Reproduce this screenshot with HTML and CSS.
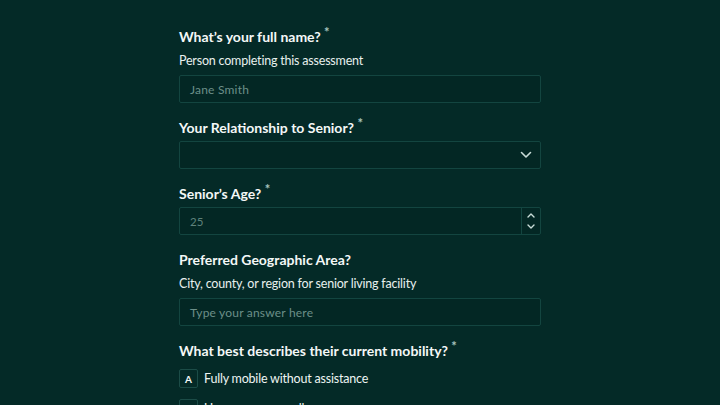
FILE: index.html
```html
<!DOCTYPE html>
<html>
<head>
<meta charset="utf-8">
<link rel="stylesheet" href="styles.css">
</head>
<body>
<main class="form">
  <section class="field">
    <h2 class="label">What’s your full name? <span class="req">*</span></h2>
    <p class="desc">Person completing this assessment</p>
    <div class="input"><span class="ph">Jane Smith</span></div>
  </section>
  <section class="field">
    <h2 class="label">Your Relationship to Senior? <span class="req">*</span></h2>
    <div class="input select">
      <svg class="chev" width="12" height="8" viewBox="0 0 12 8"><path d="M1.5 1.5 L6 6 L10.5 1.5" fill="none" stroke="#c9dcd8" stroke-width="1.6" stroke-linecap="round" stroke-linejoin="round"/></svg>
    </div>
  </section>
  <section class="field">
    <h2 class="label">Senior’s Age? <span class="req">*</span></h2>
    <div class="input number">
      <span class="ph num">25</span>
      <div class="stepper">
        <svg width="10" height="7" viewBox="0 0 10 7"><path d="M2 5 L5 2 L8 5" fill="none" stroke="#c9dcd8" stroke-width="1.4" stroke-linecap="round" stroke-linejoin="round"/></svg>
        <svg width="10" height="7" viewBox="0 0 10 7"><path d="M2 2 L5 5 L8 2" fill="none" stroke="#c9dcd8" stroke-width="1.4" stroke-linecap="round" stroke-linejoin="round"/></svg>
      </div>
    </div>
  </section>
  <section class="field">
    <h2 class="label">Preferred Geographic Area?</h2>
    <p class="desc">City, county, or region for senior living facility</p>
    <div class="input"><span class="ph">Type your answer here</span></div>
  </section>
  <section class="field">
    <h2 class="label">What best describes their current mobility? <span class="req">*</span></h2>
    <div class="options">
      <div class="option"><span class="key">A</span><span class="opt-text">Fully mobile without assistance</span></div>
      <div class="option"><span class="key">B</span><span class="opt-text">Uses a cane or walker</span></div>
    </div>
  </section>
</main>
</body>
</html>
```
FILE: styles.css
```css
html, body {
  margin: 0;
  padding: 0;
  background: #042a27;
  height: 100%;
  overflow: hidden;
}
body {
  font-family: Lato, "Noto Sans", sans-serif;
  color: #eef5f3;
}
.form {
  width: 362px;
  margin: 0 auto;
  padding-top: 28px;
  display: flex;
  flex-direction: column;
  gap: 16px;
}
.field {
  display: flex;
  flex-direction: column;
}
.label {
  margin: 0 0 4px;
  font-size: 14px;
  font-weight: 700;
  line-height: 18px;
  height: 18px;
  color: #f4f8f7;
  letter-spacing: 0;
}
.req {
  font-size: 13px;
  line-height: 0;
  vertical-align: 5px;
  color: #a9c4bf;
}
.desc {
  margin: 3px 0 6px;
  font-size: 12.5px;
  line-height: 16px;
  letter-spacing: -0.2px;
  color: #e8f0ee;
}
.input {
  height: 28px;
  box-sizing: border-box;
  border: 1px solid #134540;
  border-radius: 2px;
  background: #032724;
  display: flex;
  align-items: center;
  padding: 0 10px;
}
.ph {
  font-size: 12px;
  color: #6c8f89;
  letter-spacing: 0.2px;
}
.ph.num {
  font-size: 11.5px;
  color: #5f827c;
}
.select {
  justify-content: flex-end;
  padding-right: 8px;
}
.number {
  justify-content: space-between;
  padding-right: 0;
}
.stepper {
  height: 100%;
  width: 18px;
  border-left: 1px solid #134540;
  display: flex;
  flex-direction: column;
  align-items: center;
  justify-content: space-evenly;
}
.options {
  display: flex;
  flex-direction: column;
  gap: 11px;
  margin-top: 5px;
}
.option {
  display: flex;
  align-items: center;
  gap: 6px;
}
.key {
  width: 19px;
  height: 19px;
  box-sizing: border-box;
  border: 1px solid #1b4c47;
  border-radius: 2px;
  display: flex;
  align-items: center;
  justify-content: center;
  font-size: 10px;
  font-weight: 700;
  color: #f2f7f6;
}
.opt-text {
  font-size: 12.5px;
  letter-spacing: -0.2px;
  color: #eef5f3;
}
```
